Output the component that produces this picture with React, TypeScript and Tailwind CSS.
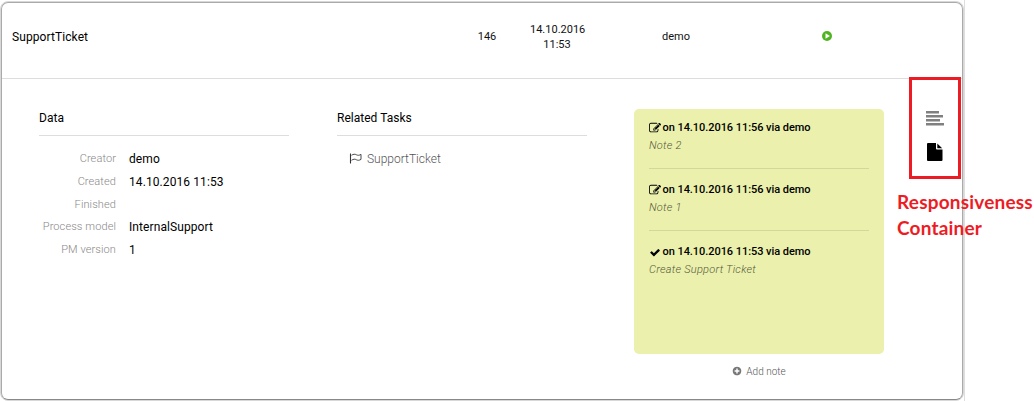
import type { ReactNode } from "react";

function EditIcon() {
  return (
    <svg viewBox="0 0 1792 1792" className="h-3 w-3 fill-current" aria-hidden="true">
      <path d="M888 1184l116-116-152-152-116 116v56h96v96h56zm440-720q-16-16-33 1l-350 350q-17 17-1 33t33-1l350-350q17-17 1-33zm80 594v190q0 119-84.5 203.5t-203.5 84.5h-832q-119 0-203.5-84.5t-84.5-203.5v-832q0-119 84.5-203.5t203.5-84.5h832q63 0 117 25 15 7 18 23 3 17-9 29l-49 49q-14 14-32 8-23-6-45-6h-832q-66 0-113 47t-47 113v832q0 66 47 113t113 47h832q66 0 113-47t47-113v-126q0-13 9-22l64-64q15-15 35-7t20 29zm-96-738l288 288-672 672h-288v-288zm444 132l-92 92-288-288 92-92q28-28 68-28t68 28l152 152q28 28 28 68t-28 68z" />
    </svg>
  );
}

function CheckIcon() {
  return (
    <svg viewBox="0 0 1792 1792" className="h-[11px] w-3 fill-current" aria-hidden="true">
      <path d="M1671 566q0 40-28 68l-724 724-136 136q-28 28-68 28t-68-28l-136-136-362-362q-28-28-28-68t28-68l136-136q28-28 68-28t68 28l294 295 656-657q28-28 68-28t68 28l136 136q28 28 28 68z" />
    </svg>
  );
}

function FlagIcon() {
  return (
    <svg viewBox="0 0 13 12" className="h-3 w-[13px] text-[#333]" fill="none" stroke="currentColor" aria-hidden="true">
      <path d="M1.5 .5v10" strokeWidth="1.1" />
      <path d="M2.5 2.3c2-1.300 3.400-1.300 5-.5 1.500.8 2.700.6 4.500-.4v5c-1.800 1-3 1.200-4.500.4-1.600-.9-3-.9-5 .5" strokeWidth="0.9" />
    </svg>
  );
}

function Note({ icon, title, text, last = false }: { icon: ReactNode; title: string; text: string; last?: boolean }) {
  return (
    <li className={last ? "h-[62px]" : "mb-[13px] h-[49px] border-b border-[#d2d79e]"}>
      <div className="flex h-4 items-center gap-[1.500px] whitespace-nowrap text-[11px] font-medium tracking-[-0.050px] text-black">
        {icon}
        <span>{title}</span>
      </div>
      <p className="mt-0.5 h-4 text-[11px] leading-4 font-light tracking-[0.270px] text-[#555a3c] italic">{text}</p>
    </li>
  );
}

const details = [
  ["Creator", "demo"],
  ["Created", "14.10.2016 11:53"],
  ["Finished", ""],
  ["Process model", "InternalSupport"],
  ["PM version", "1"],
];

export default function App() {
  return (
    <main className="relative h-[401px] w-[1034px] overflow-hidden bg-white font-['Roboto',sans-serif] text-black">
      <div className="h-[401px] w-[965px] border-r border-[#dedede] pt-px">
        <section className="h-[400px] w-[964px] rounded-lg border border-[#d8d8d8]">
          <div className="h-[398px] w-[962px] rounded-[7px] border border-[#aaa] border-b-[#888]">
            <header className="flex h-[76px] items-start border-b border-[#ddd] pl-2.5 text-[11px] leading-[15px] text-[#111]">
              <h1 className="w-[428px] pt-[26px] text-xs leading-4 font-normal tracking-[0.090px] text-black">SupportTicket</h1>
              <span className="w-[94px] pt-[26px] text-center">146</span>
              <span className="w-[46px] pt-[19px] text-center whitespace-nowrap">
                <span className="-mx-1 block">14.10.2016</span>
                <span className="block">11:53</span>
              </span>
              <span className="w-[192px] pt-[26px] text-center">demo</span>
              <span className="flex w-[109px] justify-center pt-[28px]">
                <svg viewBox="0 0 10 10" className="h-2.5 w-2.5" role="img" aria-label="Running">
                  <circle cx="5" cy="5" r="5" fill="#50b422" />
                  <path d="M3.500 2.300 8 5 3.500 7.700z" fill="white" />
                </svg>
              </span>
            </header>

            <div className="flex pt-[30px] pl-[37px]">
              <section className="w-[250px]">
                <h2 className="h-[27px] border-b border-[#ddd] text-xs leading-[18px] font-normal tracking-[0.090px]">Data</h2>
                <dl className="pt-3">
                  {details.map(([label, value]) => (
                    <div key={label} className="flex h-[22.700px] items-center leading-[22px]">
                      <dt className="w-[77px] text-right text-[11px] font-light tracking-[0.100px] whitespace-nowrap text-[#888]">{label}</dt>
                      <dd className="pl-[13px] text-xs tracking-[0.090px]">{value}</dd>
                    </div>
                  ))}
                </dl>
              </section>

              <section className="ml-12 w-[250px]">
                <h2 className="h-[27px] border-b border-[#ddd] text-xs leading-[18px] font-normal tracking-[0.020px]">Related Tasks</h2>
                <div className="flex items-center gap-[5px] pt-[14px] pl-3 text-xs leading-[18px] font-light text-[#555]">
                  <FlagIcon />
                  <span>SupportTicket</span>
                </div>
              </section>

              <section className="ml-[47px] w-[250px]">
                <ul className="h-[245px] rounded-[5px] bg-[#ebf0ac] px-[15px] pt-[11px]">
                  <Note icon={<EditIcon />} title="on 14.10.2016 11:56 via demo" text="Note 2" />
                  <Note icon={<EditIcon />} title="on 14.10.2016 11:56 via demo" text="Note 1" />
                  <Note icon={<CheckIcon />} title="on 14.10.2016 11:53 via demo" text="Create Support Ticket" last />
                </ul>
                <button className="mx-auto mt-[9px] flex h-4 items-center gap-1 text-[10px] font-light text-[#555]">
                  <svg viewBox="0 0 1792 1792" className="h-2.5 w-2.5 fill-[#777]" aria-hidden="true">
                    <path d="M1344 960v-128q0-26-19-45t-45-19h-256v-256q0-26-19-45t-45-19h-128q-26 0-45 19t-19 45v256h-256q-26 0-45 19t-19 45v128q0 26 19 45t45 19h256v256q0 26 19 45t45 19h128q26 0 45-19t19-45v-256h256q26 0 45-19t19-45zm320-64q0 209-103 385.500t-279.500 279.500-385.500 103-385.500-103-279.500-279.500-103-385.500 103-385.500 279.500-279.500 385.500-103 385.500 103 279.500 279.500 103 385.500z" />
                  </svg>
                  Add note
                </button>
              </section>

              <nav className="ml-[42px] flex flex-col items-start gap-[17px] pt-[2px]" aria-label="Panels">
                <svg viewBox="0 0 18 15" className="h-[15px] w-[18px]" aria-hidden="true">
                  <path d="M0 1.200h13M0 5.200h17M0 9.200h14M0 13.200h18" stroke="#808080" strokeWidth="2.400" />
                </svg>
                <svg viewBox="0 0 16 18" className="ml-px h-[18px] w-4" aria-hidden="true">
                  <path d="M1 0h8v5.500q0 1 1 1h5.500v10.500q0 1-1 1H1q-1 0-1-1V1q0-1 1-1zM10.300 .5 15.200 5.300H10.300z" />
                </svg>
              </nav>
            </div>
          </div>
        </section>
      </div>
      <div className="pointer-events-none absolute top-[77px] left-[909px] h-[102px] w-[52px] border-3 border-[#ed1c24]" />
      <p className="absolute top-[189px] left-[897px] font-['Lato',sans-serif] text-[19px] leading-[26px] font-bold tracking-[0.200px] whitespace-nowrap text-[#ed1c24]">
        Responsiveness
        <br />
        Container
      </p>
    </main>
  );
}
